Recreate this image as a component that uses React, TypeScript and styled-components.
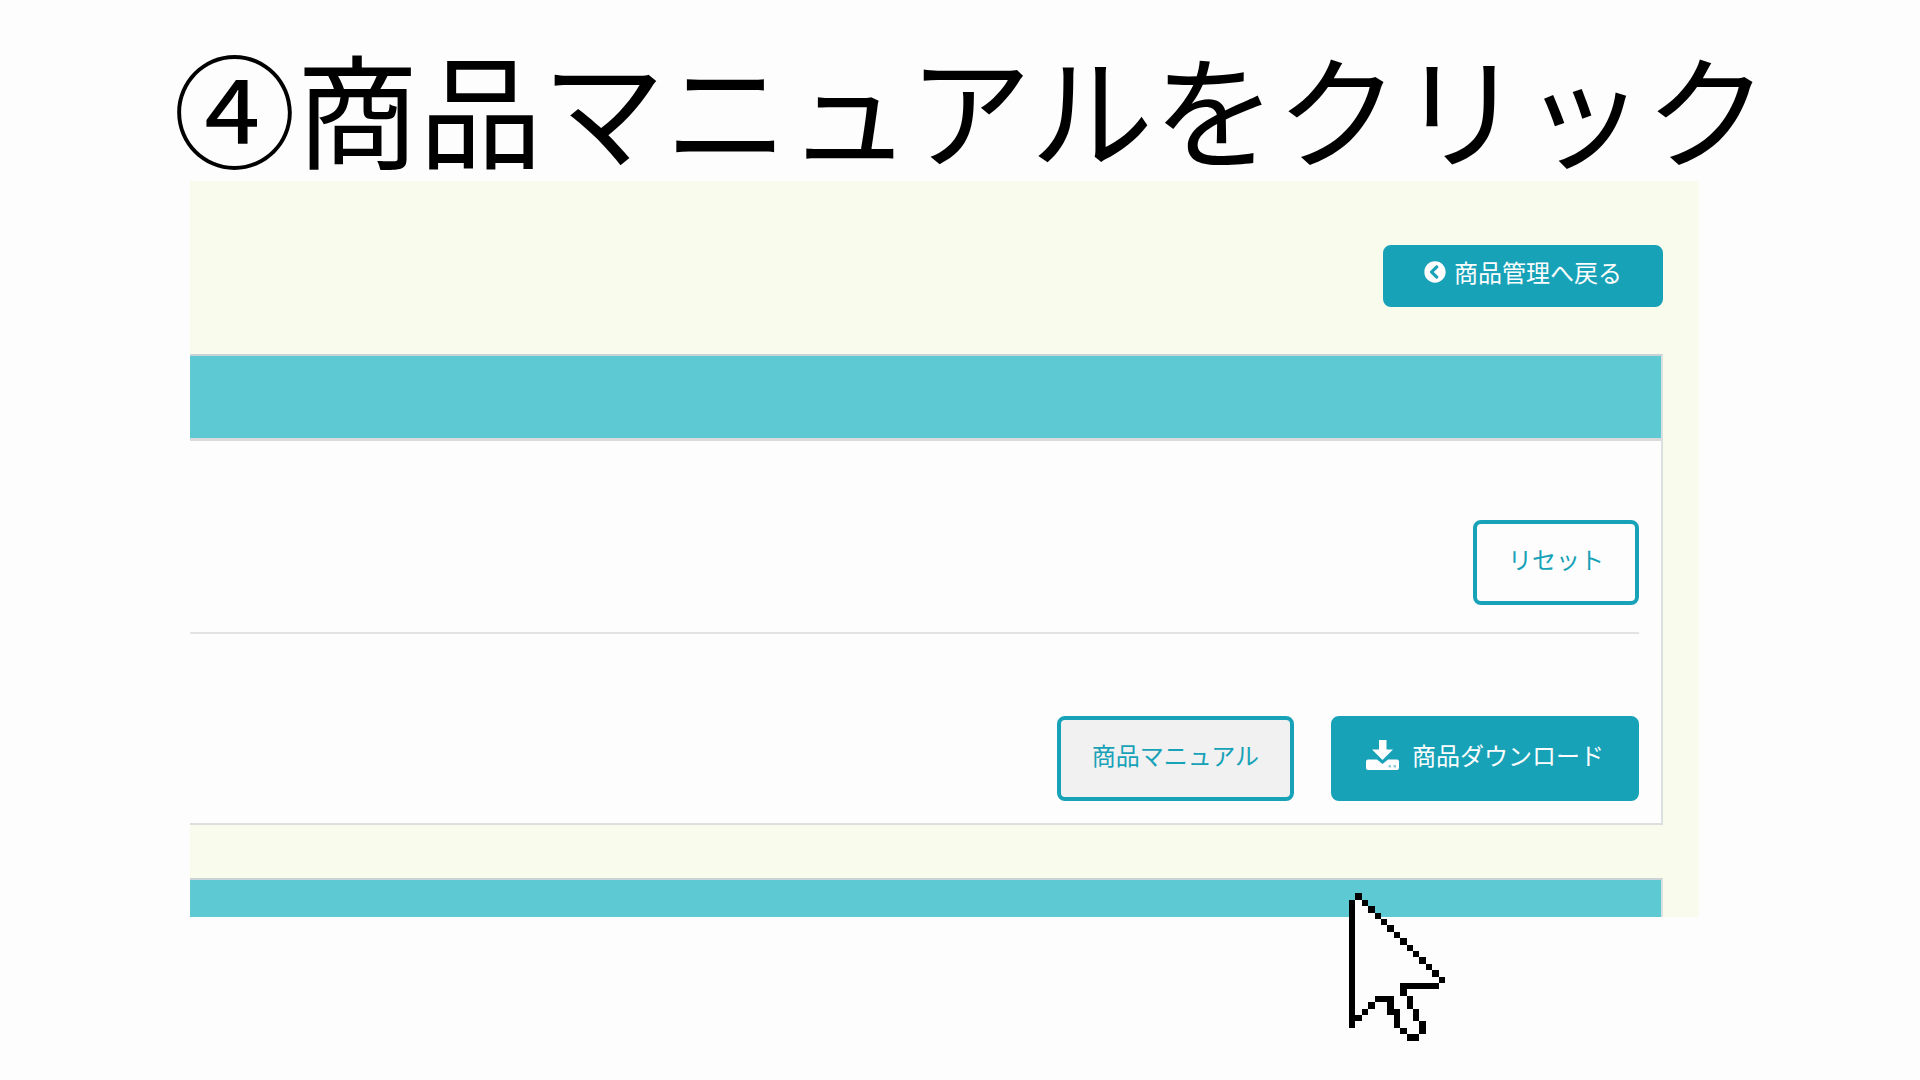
import React from 'react';
import styled, { createGlobalStyle, css } from 'styled-components';
import { FaChevronCircleLeft } from 'react-icons/fa';

const GlobalStyle = createGlobalStyle`
  * {
    box-sizing: border-box;
  }
  body {
    margin: 0;
    background: #fdfdfd;
    color: #000;
    font-family: 'Noto Sans CJK JP', sans-serif;
  }
`;

const Page = styled.div`
  display: flex;
  flex-direction: column;
  min-height: 100vh;
  overflow: hidden;
`;

const Title = styled.h1`
  margin: 0;
  padding: 33px 0 3px 173px;
  font-size: 123px;
  font-weight: 400;
  line-height: 145px;
  white-space: nowrap;
`;

const Stage = styled.main`
  position: relative;
  margin: 0 221px 0 190px;
  padding-top: 64px;
  background: #f9fbed;
`;

const Toolbar = styled.div`
  display: flex;
  justify-content: flex-end;
  padding: 0 36px 47px 0;
`;

const Card = styled.section`
  margin-right: 36px;
  border-top: 2px solid #c9d3d5;
  border-right: 2px solid #dcdfe0;
  background: #fdfdfd;
`;

const SearchCard = styled(Card)`
  margin-bottom: 53px;
  border-bottom: 2px solid #dcdfdc;
`;

const CardHeader = styled.header`
  height: 85px;
  border-bottom: 3px solid #d8dadb;
  background: #5cc9d3;
`;

const CardHeaderStub = styled.header`
  height: 37px;
  background: #5cc9d3;
`;

const CardBody = styled.div`
  padding: 79px 22px 22px 0;
`;

const Row = styled.div`
  display: flex;
  justify-content: flex-end;
  gap: 37px;
`;

const Divider = styled.hr`
  margin: 27px 0 82px;
  border: 0;
  border-top: 2px solid #e2e3e4;
`;

type Variant = 'solid' | 'outline' | 'hovered';

const variants = {
  solid: css`
    background: #17a2b8;
    color: #fdfdfd;
  `,
  outline: css`
    background: #fdfdfd;
    color: #17a2b8;
  `,
  hovered: css`
    background: #f1f1f1;
    color: #17a2b8;
  `,
};

const Button = styled.button<{ $variant: Variant; $compact?: boolean }>`
  display: inline-flex;
  align-items: center;
  gap: ${(p) => (p.$compact ? 8 : 13)}px;
  height: ${(p) => (p.$compact ? 62 : 85)}px;
  padding: 0 ${(p) => (p.$compact ? 37 : 31)}px 8px;
  border: 4px solid #17a2b8;
  border-radius: 8px;
  font-family: inherit;
  font-size: 24px;
  line-height: 36px;
  white-space: nowrap;
  cursor: pointer;
  ${(p) => variants[p.$variant]}
`;

const DownloadIcon = () => (
  <svg width="33" height="30" viewBox="0 0 33 30" aria-hidden="true">
    <path
      fill="currentColor"
      d="M13 0h7.500v9.500H27L16.500 20 6 9.500h7zM2 19.500h9l5.500 4.500 5.500-4.500h9q2 0 2 2V28q0 2-2 2H2q-2 0-2-2v-6.500q0-2 2-2z"
    />
    <path fill="#17a2b8" opacity="0.500" d="M22.500 25h2.500v2.500h-2.500zM27.500 25H30v2.500h-2.500z" />
  </svg>
);

const pointerRows = [
  '.#.............',
  '#o#............',
  '#oo#...........',
  '#ooo#..........',
  '#oooo#.........',
  '#ooooo#........',
  '#oooooo#.......',
  '#ooooooo#......',
  '#oooooooo#.....',
  '#ooooooooo#....',
  '#oooooooooo#...',
  '#ooooooooooo#..',
  '#oooooooooooo#.',
  '#ooooooooooooo#',
  '#ooooooo######.',
  '#ooooooo#......',
  '#ooo###oo#.....',
  '#oo#..#oo#.....',
  '#o#...##oo#....',
  '##.....#oo#....',
  '#......#ooo#...',
  '........#oo#...',
  '.........##....',
];

const PointerSvg = styled.svg`
  position: absolute;
  right: 254px;
  bottom: -124px;
  width: 96px;
  height: 148px;
`;

const Pointer = () => (
  <PointerSvg viewBox="0 0 15 23" shapeRendering="crispEdges" aria-hidden="true">
    {pointerRows.flatMap((row, y) =>
      [...row].map((cell, x) =>
        cell === '.' ? null : (
          <rect key={`${x}-${y}`} x={x} y={y} width="1" height="1" fill={cell === '#' ? '#000' : '#fdfdfd'} />
        ),
      ),
    )}
  </PointerSvg>
);

export default function App() {
  return (
    <Page>
      <GlobalStyle />
      <Title>④商品マニュアルをクリック</Title>
      <Stage>
        <Toolbar>
          <Button type="button" $variant="solid" $compact>
            <FaChevronCircleLeft size={22} aria-hidden="true" />
            商品管理へ戻る
          </Button>
        </Toolbar>
        <SearchCard>
          <CardHeader />
          <CardBody>
            <Row>
              <Button type="button" $variant="outline">
                リセット
              </Button>
            </Row>
            <Divider />
            <Row>
              <Button type="button" $variant="hovered">
                商品マニュアル
              </Button>
              <Button type="button" $variant="solid">
                <DownloadIcon />
                商品ダウンロード
              </Button>
            </Row>
          </CardBody>
        </SearchCard>
        <Card>
          <CardHeaderStub />
        </Card>
        <Pointer />
      </Stage>
    </Page>
  );
}
